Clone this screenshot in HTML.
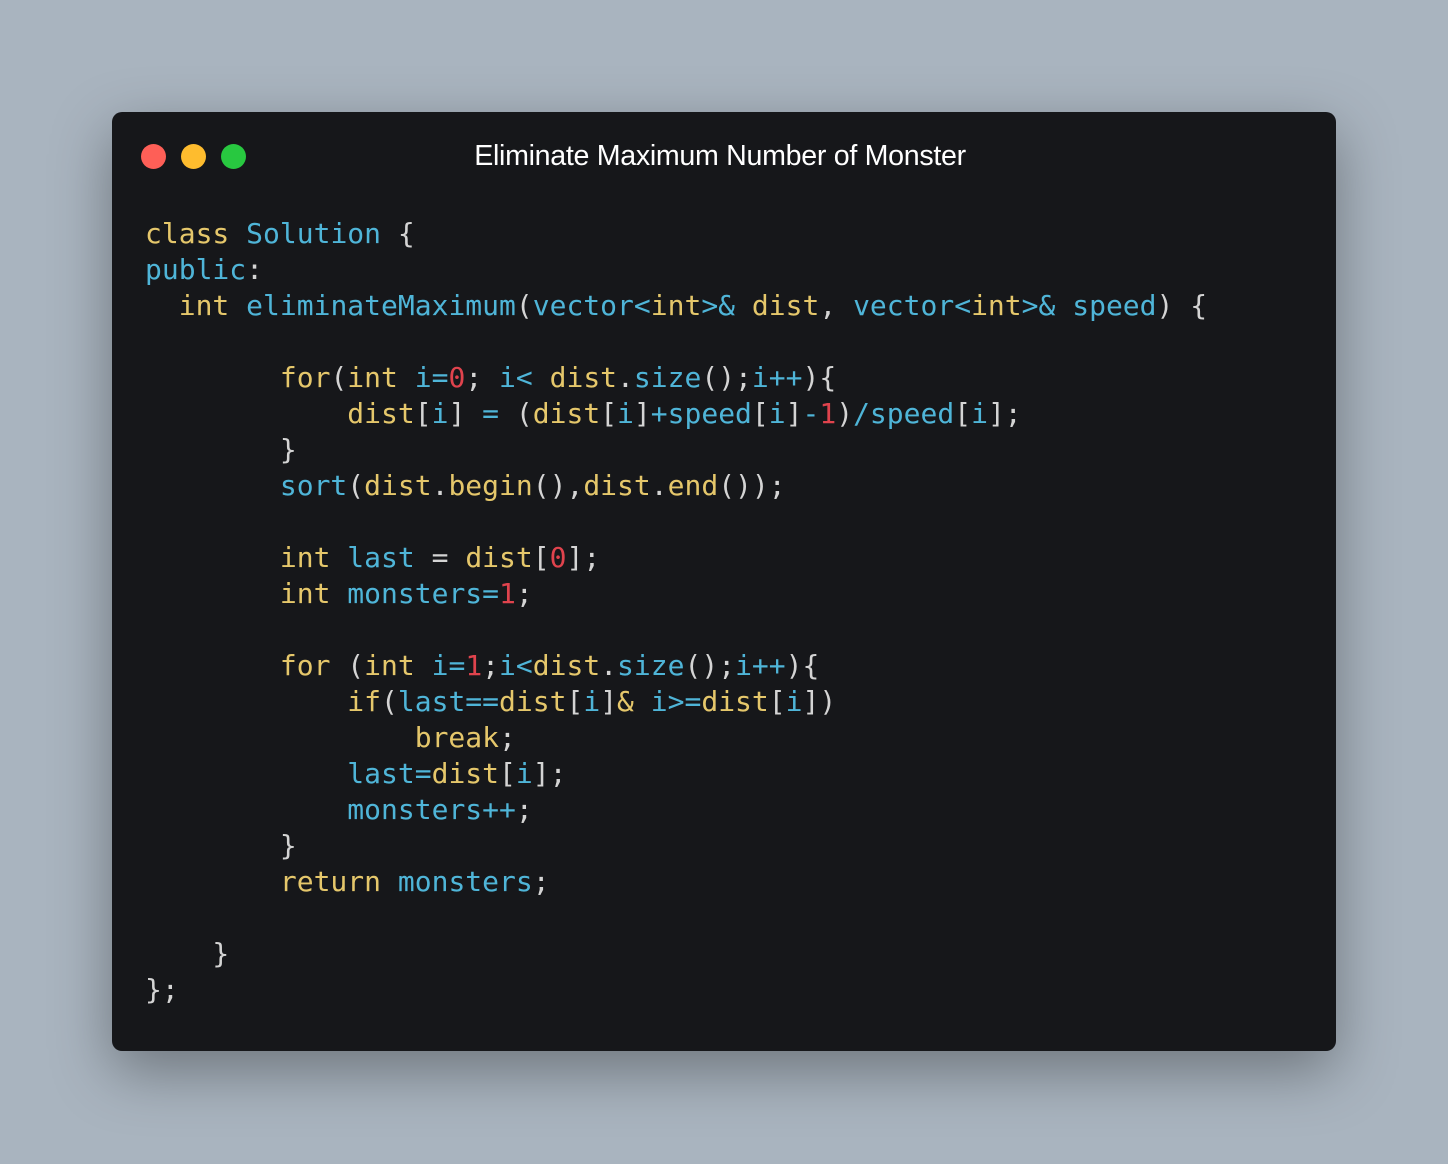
<!DOCTYPE html>
<html><head><meta charset="utf-8"><style>
html,body{margin:0;padding:0;}
body{width:1448px;height:1164px;background:#a9b4bf;position:relative;overflow:hidden;}
.win{position:absolute;left:112px;top:112px;width:1224px;height:939px;background:#16171a;border-radius:10px;box-shadow:0 20px 60px rgba(0,0,0,0.35);}
.dot{position:absolute;top:144px;width:25px;height:25px;border-radius:50%;}
.title{position:absolute;left:108px;width:1224px;top:140px;text-align:center;color:#fff;font:28.6px "Liberation Sans",sans-serif;letter-spacing:-0.3px;}
pre{position:absolute;left:145px;top:216px;margin:0;font:28px/36px "DejaVu Sans Mono",monospace;color:#d4d4d4;}
.y{color:#e5c76b}.b{color:#4fb5d8}.r{color:#e0434d}
</style></head><body>
<div class="win"></div>
<div class="dot" style="left:141px;background:#fe5f57"></div>
<div class="dot" style="left:181px;background:#febc2e"></div>
<div class="dot" style="left:221px;background:#28c840"></div>
<div class="title">Eliminate Maximum Number of Monster</div>
<pre><span class="y">class</span> <span class="b">Solution</span> {
<span class="b">public</span>:
  <span class="y">int</span> <span class="b">eliminateMaximum</span>(<span class="b">vector&lt;</span><span class="y">int</span><span class="b">&gt;&amp;</span> <span class="y">dist</span>, <span class="b">vector&lt;</span><span class="y">int</span><span class="b">&gt;&amp;</span> <span class="b">speed</span>) {

        <span class="y">for</span>(<span class="y">int</span> <span class="b">i=</span><span class="r">0</span>; <span class="b">i&lt;</span> <span class="y">dist</span>.<span class="b">size</span>();<span class="b">i++</span>){
            <span class="y">dist</span>[<span class="b">i</span>] <span class="b">=</span> (<span class="y">dist</span>[<span class="b">i</span>]<span class="b">+speed</span>[<span class="b">i</span>]<span class="b">-</span><span class="r">1</span>)<span class="b">/speed</span>[<span class="b">i</span>];
        }
        <span class="b">sort</span>(<span class="y">dist</span>.<span class="y">begin</span>(),<span class="y">dist</span>.<span class="y">end</span>());

        <span class="y">int</span> <span class="b">last</span> = <span class="y">dist</span>[<span class="r">0</span>];
        <span class="y">int</span> <span class="b">monsters=</span><span class="r">1</span>;

        <span class="y">for</span> (<span class="y">int</span> <span class="b">i=</span><span class="r">1</span>;<span class="b">i&lt;</span><span class="y">dist</span>.<span class="b">size</span>();<span class="b">i++</span>){
            <span class="y">if</span>(<span class="b">last==</span><span class="y">dist</span>[<span class="b">i</span>]<span class="y">&amp;</span> <span class="b">i&gt;=</span><span class="y">dist</span>[<span class="b">i</span>])
                <span class="y">break</span>;
            <span class="b">last=</span><span class="y">dist</span>[<span class="b">i</span>];
            <span class="b">monsters++</span>;
        }
        <span class="y">return</span> <span class="b">monsters</span>;

    }
};</pre>
</body></html>
